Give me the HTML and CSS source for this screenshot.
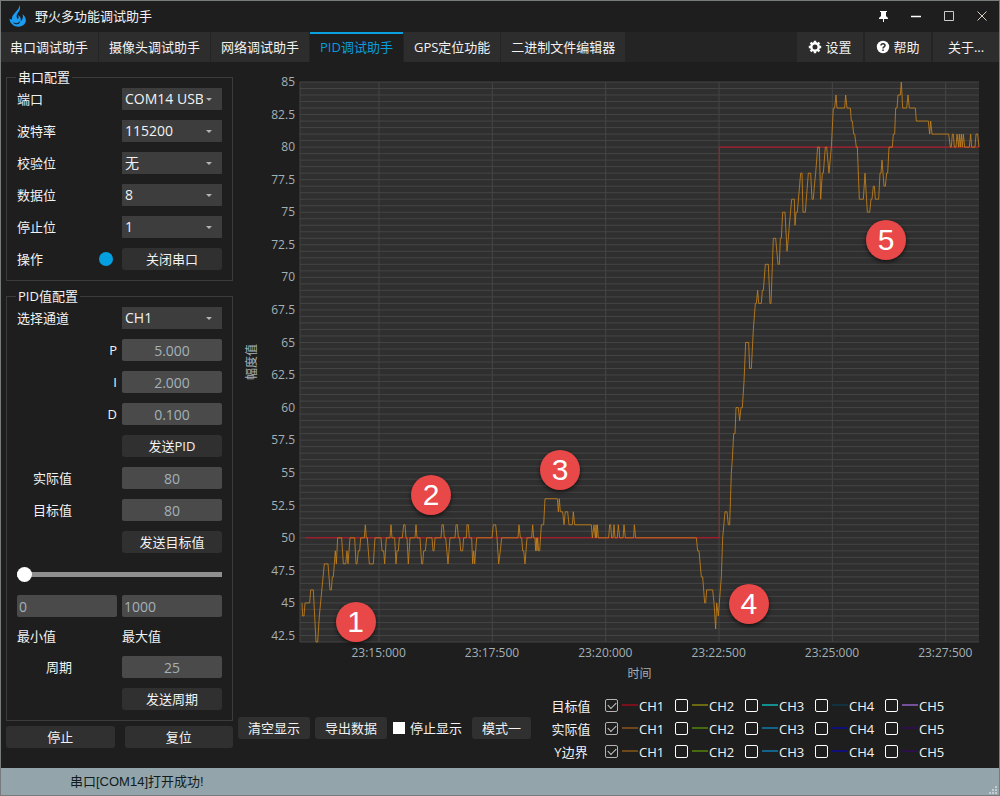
FILE: index.html
```html
<!DOCTYPE html>
<html lang="zh-CN">
<head>
<meta charset="utf-8">
<meta name="viewport" content="width=device-width, initial-scale=1">
<title>野火多功能调试助手</title>
<link rel="stylesheet" href="styles.css">
</head>
<body>
<div class="app">
  <header class="titlebar">
    <svg class="logo" viewBox="0 0 18 22" aria-hidden="true"><path fill="#1c9cf0" d="M10.500 0C12 4 10 6 8.500 8.500c-1.500 2.500-1 4.500.5 5.500 1-1 .5-2.500 0-4 2.500 1.500 3.500 4 2.500 6.500 2-1.500 3-4 2-7.500 3.500 3 4.500 7 2 10-3 3.500-9 3.500-12 .5C1.500 18 .5 16 .5 13.500c.8 1 1.700 1.300 2.500 1C2.500 11 5 9 7 6.500 9 4.500 10.500 2.500 10.500 0z"/><path fill="#1e1e1e" d="M3.500 16.500c2.500 2.500 6 2 7.500-.5.5 3.500-5 5-7.500.5z"/></svg>
    <h1 class="title">野火多功能调试助手</h1>
    <button class="winbtn" type="button" aria-label="置顶"><svg viewBox="0 0 14 14"><path fill="#fff" d="M4 2h7v1h-1v4l2 2v1H8v3H7v-3H3V9l2-2V3H4z"/></svg></button>
    <button class="winbtn" type="button" aria-label="最小化"><svg viewBox="0 0 14 14"><path stroke="#fff" stroke-width="1.5" d="M2 7.5h10"/></svg></button>
    <button class="winbtn" type="button" aria-label="最大化"><svg viewBox="0 0 14 14"><path fill="none" stroke="#ccc" d="M2.5 2.5h9v9h-9z"/></svg></button>
    <button class="winbtn" type="button" aria-label="关闭"><svg viewBox="0 0 14 14"><path stroke="#d8cfc0" d="M2.5 2.5l9 9m0-9l-9 9"/></svg></button>
  </header>

  <nav class="tabs">
    <button class="tab" type="button">串口调试助手</button>
    <button class="tab" type="button">摄像头调试助手</button>
    <button class="tab" type="button">网络调试助手</button>
    <button class="tab active" type="button">PID调试助手</button>
    <button class="tab" type="button">GPS定位功能</button>
    <button class="tab" type="button">二进制文件编辑器</button>
    <div class="tools">
      <button class="tool" type="button"><svg viewBox="0 0 14 14"><circle cx="7" cy="7" r="3.7" fill="none" stroke="#fff" stroke-width="2.4"/><path stroke="#fff" stroke-width="2.4" d="M7 .8v2M7 11.200v2M.8 7h2M11.200 7h2M2.600 2.600l1.400 1.400M10 10l1.400 1.400M2.600 11.400L4 10M10 4l1.400-1.400"/></svg>设置</button>
      <button class="tool" type="button"><svg viewBox="0 0 14 14"><circle cx="7" cy="7" r="6.200" fill="#fff"/><path fill="none" stroke="#2d2d2d" stroke-width="1.500" d="M5 5.500c0-2.500 4-2.500 4 0C9 7 7 6.800 7 8.500M7 9.500V11"/></svg>帮助</button>
      <button class="tool" type="button">关于...</button>
    </div>
  </nav>

  <div class="content">
    <aside class="side">
      <fieldset class="group">
        <legend>串口配置</legend>
        <div class="form">
          <label for="port">端口</label>
          <span class="pick"><select id="port"><option>COM14 USB</option></select></span>
          <label for="baud">波特率</label>
          <span class="pick"><select id="baud"><option>115200</option></select></span>
          <label for="parity">校验位</label>
          <span class="pick"><select id="parity"><option>无</option></select></span>
          <label for="data">数据位</label>
          <span class="pick"><select id="data"><option>8</option></select></span>
          <label for="stop">停止位</label>
          <span class="pick"><select id="stop"><option>1</option></select></span>
          <span class="action">操作<i class="lamp"></i></span>
          <button class="btn" type="button">关闭串口</button>
        </div>
      </fieldset>

      <fieldset class="group">
        <legend>PID值配置</legend>
        <div class="form">
          <label for="channel">选择通道</label>
          <span class="pick"><select id="channel"><option>CH1</option></select></span>
          <label class="end" for="kp">P</label>
          <input class="field" id="kp" value="5.000">
          <label class="end" for="ki">I</label>
          <input class="field" id="ki" value="2.000">
          <label class="end" for="kd">D</label>
          <input class="field" id="kd" value="0.100">
          <button class="btn second" type="button">发送PID</button>
          <label class="inner" for="actual">实际值</label>
          <input class="field" id="actual" value="80">
          <label class="inner" for="target">目标值</label>
          <input class="field" id="target" value="80">
          <button class="btn second" type="button">发送目标值</button>
          <input class="slider" type="range" min="0" max="1000" value="0" aria-label="目标值">
          <input class="field start" id="min" value="0">
          <input class="field start" id="max" value="1000">
          <label class="caption" for="min">最小值</label>
          <label class="caption" for="max">最大值</label>
          <label class="inner" for="period">周期</label>
          <input class="field" id="period" value="25">
          <button class="btn second" type="button">发送周期</button>
        </div>
      </fieldset>

      <div class="pair">
        <button class="btn" type="button">停止</button>
        <button class="btn" type="button">复位</button>
      </div>
    </aside>

    <main class="main">
      <div class="chart">
        <div class="ytitle">幅度值</div>
        <div class="yaxis" id="yaxis"></div>
        <div class="plot">
          <svg class="canvas" viewBox="0 0 2037 43" preserveAspectRatio="none">
            <path class="grid" id="grid"/>
            <path class="line target" id="targetLine"/>
            <path class="line actual" id="actualLine"/>
          </svg>
          <span class="pin" style="left:8.2%;top:96.500%">1</span>
          <span class="pin" style="left:19.300%;top:73.700%">2</span>
          <span class="pin" style="left:38.300%;top:69.300%">3</span>
          <span class="pin" style="left:66.100%;top:93.300%">4</span>
          <span class="pin" style="left:86.300%;top:28.300%">5</span>
        </div>
        <div class="xaxis">
          <span>23:15:000</span><span>23:17:500</span><span>23:20:000</span><span>23:22:500</span><span>23:25:000</span><span>23:27:500</span>
        </div>
        <div class="xtitle">时间</div>
      </div>

      <div class="bottom">
        <div class="actions">
          <button class="btn" type="button">清空显示</button>
          <button class="btn" type="button">导出数据</button>
          <label class="pause"><input type="checkbox">停止显示</label>
          <button class="btn" type="button">模式一</button>
        </div>
        <div class="series" id="series"></div>
      </div>
    </main>
  </div>

  <footer class="status">串口[COM14]打开成功!
    <svg class="grip" viewBox="0 0 9 9" aria-hidden="true"><path fill="#c4cccf" d="M6 0h2v2H6zM3 3h2v2H3zM6 3h2v2H6zM0 6h2v2H0zM3 6h2v2H3zM6 6h2v2H6z"/></svg>
  </footer>
</div>
<script src="chart.js"></script>
</body>
</html>
```

FILE: styles.css
```css
* { box-sizing: border-box; }

body {
  margin: 0;
  background: #1e1e1e;
  color: #f2f2f2;
  font: 13px/16px "Open Sans", "Noto Sans CJK SC", sans-serif;
}

button, input, select { font: inherit; color: inherit; margin: 0; }
button { border: 0; padding: 0; }

.app {
  position: relative;
  display: flex;
  flex-direction: column;
  min-height: 100vh;
  overflow: hidden;
}
.app::after {
  content: "";
  position: absolute;
  inset: 0;
  border: 1px solid #777b7b;
  pointer-events: none;
}

.titlebar { display: flex; align-items: center; height: 32px; padding: 0 2px 0 9px; }
.logo { width: 18px; height: 22px; }
.title { flex: 1; margin: 0 0 0 8px; font-size: 13px; font-weight: 400; }
.winbtn { display: grid; place-items: center; width: 33px; height: 30px; background: none; }
.winbtn svg { width: 14px; height: 14px; }

.tabs { display: flex; gap: 1px; height: 30px; background: #242424; }
.tab { padding: 0 10px; background: #2d2d2d; white-space: nowrap; }
.tab.active { background: #1e1e1e; color: #0a9bdc; box-shadow: inset 0 2px #0aa0e0; }
.tools { display: flex; gap: 2px; margin-left: auto; padding-right: 1px; }
.tool { display: flex; align-items: center; justify-content: center; gap: 3px; width: 66px; background: #2d2d2d; }
.tool svg { width: 14px; height: 14px; }

.content { flex: 1; display: flex; gap: 5px; }

.side { display: flex; flex-direction: column; width: 233px; padding: 7px 0 20px 6px; }
.group { min-width: 0; margin: 0 0 7px; padding: 3px 10px 10px; border: 1px solid #3c3c3c; }
.group + .group { margin-bottom: 5px; }
.group legend { height: 16px; margin-left: -1px; padding: 0 2px; }
.form { display: grid; grid-template-columns: 1fr 1fr; gap: 10px 5px; align-items: center; }
.end { text-align: right; }
.inner { padding-right: 45px; text-align: right; }
.caption { line-height: 19px; }
.second { grid-column: 2; }
.action { display: flex; align-items: center; justify-content: space-between; padding-right: 4px; }
.lamp { width: 14px; height: 14px; border-radius: 50%; background: #049fdf; }

.btn { height: 22px; border-radius: 3px; background: #303030; }

.pick { position: relative; display: block; height: 22px; }
.pick select {
  width: 100%;
  height: 22px;
  padding: 0 19px 0 3px;
  border: 0;
  border-radius: 0;
  background: #3d3d3d;
  font-size: 14px;
  appearance: none;
}
.pick::after {
  content: "";
  position: absolute;
  top: 10px;
  right: 10px;
  border: 3px solid transparent;
  border-top-color: #b4b4b4;
  border-bottom: 0;
  pointer-events: none;
}

.field {
  width: 100%;
  height: 22px;
  padding: 0 2px;
  border: 0;
  border-radius: 2px;
  background: #4a4a4a;
  color: #a3b1b7;
  font-size: 14px;
  text-align: center;
}
.field.start { text-align: left; }

.slider { grid-column: 1 / -1; width: 100%; height: 22px; background: none; appearance: none; }
.slider::-webkit-slider-runnable-track { height: 5px; background: #8f8f8f; }
.slider::-webkit-slider-thumb { width: 15px; height: 15px; margin-top: -5px; border-radius: 50%; background: #fff; appearance: none; }

.pair { display: grid; grid-template-columns: 1fr 1fr; gap: 10px; }

.main { flex: 1; display: flex; flex-direction: column; min-width: 0; padding: 20px 20px 5px 0; }

.chart {
  flex: 1;
  display: grid;
  grid-template-columns: 20px 42px 1fr;
  grid-template-rows: 1fr 22px 20px;
  padding-right: 1px;
  color: #a3b1b7;
  font-size: 12px;
}
.ytitle { padding-right: 0; writing-mode: vertical-rl; text-orientation: sideways; transform: rotate(180deg); text-align: center; line-height: 12px; justify-self: end; }
.yaxis { display: flex; flex-direction: column; justify-content: space-between; margin: -8px 0 -2px; padding-right: 5px; text-align: right; }
.plot { position: relative; background: #2f2f2f; }
.canvas { position: absolute; width: 100%; height: 100%; overflow: visible; }
.grid, .line { fill: none; stroke-width: 1px; vector-effect: non-scaling-stroke; }
.grid { stroke: #454545; shape-rendering: crispEdges; }
.line.target { stroke: #c8102a; shape-rendering: crispEdges; }
.line.actual { stroke: #c58019; stroke-opacity: 0.85; }
.xaxis { grid-column: 3; display: flex; padding-left: 22px; line-height: 22px; }
.xaxis span { flex: 0 0 17.25%; text-align: center; }
.xtitle { grid-column: 3; text-align: center; line-height: 20px; }

.pin {
  position: absolute;
  width: 40px;
  height: 40px;
  margin: -20px 0 0 -20px;
  border-radius: 50%;
  background: #e84848;
  box-shadow: 0 2px 4px #0009;
  color: #fff;
  font: 30px/40px "Liberation Sans", sans-serif;
  text-align: center;
}

.bottom { display: flex; justify-content: space-between; margin-top: 10px; padding-right: 34px; }
.actions { display: flex; align-items: center; gap: 5px; height: 68px; }
.actions .btn { padding: 0 10px; }
.pause { display: flex; align-items: center; gap: 5px; padding: 0 5px 0 1px; }
.pause input { width: 12px; height: 12px; border: 0; background: #fff; appearance: none; }
.pause input:checked { background: #0aa0e0; }

.row { display: flex; align-items: center; height: 23px; }
.row-name { width: 40px; margin-right: 14px; text-align: center; }
.row label { display: flex; align-items: center; width: 70px; white-space: nowrap; }
.row label:last-child { width: 61px; }
.row input { position: relative; flex: none; width: 13px; height: 13px; border: 1px solid #fff; border-radius: 2px; appearance: none; }
.row input:checked { border-color: #b4b4b4; }
.row input:checked::after {
  content: "";
  position: absolute;
  left: 2px;
  top: 2px;
  width: 7px;
  height: 4px;
  border: solid #ccc;
  border-width: 0 0 1px 1px;
  transform: rotate(-45deg);
}
.swatch { width: 16px; height: 2px; margin: 0 1px 2px 4px; }

.status {
  position: relative;
  height: 28px;
  padding-left: 70px;
  background: #93a4aa;
  color: #101c20;
  font-family: "Liberation Sans", "Noto Sans CJK SC", sans-serif;
  line-height: 28px;
}
.grip { position: absolute; right: 2px; bottom: 1px; width: 9px; height: 9px; }
```

FILE: chart.js
```js
const TOP = 85;

// Runs of samples: x offset of the run, then "x,value" pairs.
const actual = [
  [-30, "36,45 38,44 42,44 45,45 59,45 62,46 70,46 78,42 83,42 88,44 103,48 114,48 120,46 124,46 127,47 130,47 136,49 139,48 143,50 155,50 160,48 167,48 171,49 174,48 180,50 194,50 198,48 201,48 205,49 209,49 212,50 223,50 226,51 229,50 232,50 238,48 250,48 255,50 273,50 276,49 281,49 284,48 289,50 300,50 303,51 306,50 314,50 318,48 321,49 325,49 328,50 337,50 341,51 345,51 348,50 351,50 355,48 360,50 375,50 378,51 381,50 390,50 395,48 398,48 401,49 406,49 410,50 426,50 429,49 432,49 435,50 453,50 456,51 460,51 463,50 467,50 474,48 480,50 495,50 498,51 502,51 505,50 509,50 512,49 518,49 521,50 529,50 531,51 535,51 538,50 545,50 548,48 551,49 554,48 560,50 606,50 610,51 617,51 621,50 626,48 631,49 635,50"],
  [630, "24,50 27,51 31,50 35,50 38,49 41,49 45,48 51,50 65,50 68,51 71,50 75,50 77,49 79,50 81,49 83,50 86,49 89,49 94,51 101,51 105,53 142,53 145,52 148,53 151,52 158,52 162,51 166,52 173,52 177,51 187,51 190,52 194,51 244,51 247,50 252,51 256,50 258,51 260,50 262,51 265,50 296,50 299,51 302,51 305,50 309,50 312,51 315,50 322,50 325,51 329,50 339,50 342,51 346,50 371,50 373,51 377,50 559,50 563,49 567,49 574,47 578,47 584,45 587,45 590,46 608,46 612,45 617,43 620,45 625,44 628,45 634,47 638,50 645,52 651,52 655,51 659,51 664,55"],
  [1200, "97,56 101,58 105,58 108,60 115,60 119,59 123,60 127,60 132,62 137,65 146,65 149,63 154,63 160,66 166,68 169,68 173,69 176,68 184,68 187,69 190,69"],
  [1380, "16,71 25,71 30,68 33,68 40,73 47,73 54,71 58,71 61,73 64,73 68,75 75,75 81,72 85,73 88,74 95,76 103,76 105,74 108,75 112,75 122,78 126,78 129,75 136,75 145,78 152,78 156,76 160,76 163,77 167,78 173,80 178,80 182,76 187,78 190,78 196,80 200,80 207,78 214,80 218,82 220,83 224,83 228,84 231,83 254,83 257,84 261,83 271,83 274,82 277,82 281,81 284,81 289,80 292,80 298,76 310,76 315,78 322,75 329,75 333,76 336,76 340,77 343,77 346,76 356,76 360,78 363,78 366,79 372,77 376,77 380,78 383,78 387,80 397,80 400,81 404,81 407,83 411,83 414,84 421,84 424,85 428,83 440,83 444,84 448,83 466,83 469,82 505,82 509,81 512,82 516,81 566,81 571,80 574,80 577,81 580,81 583,80 588,80 591,81 596,80 598,81 601,80 604,81 607,80 610,81 614,80 628,80 632,81 635,80 645,80 648,81 653,81 657,80"]
];

const points = actual.flatMap(([offset, run]) =>
  run.split(" ").map(pair => {
    const [x, value] = pair.split(",").map(Number);
    return (x + offset) + " " + (TOP - value);
  }));
document.getElementById("actualLine").setAttribute("d", "M" + points.join("L"));
document.getElementById("targetLine").setAttribute("d", "M15 35H1258V5H2037");

let grid = "M0 0V43";
for (let y = 0; y <= 43; y += 0.5) grid += "M0 " + y + "H2037";
for (const x of [237, 577, 917, 1257, 1597, 1937]) grid += "M" + x + " 0V43";
document.getElementById("grid").setAttribute("d", grid);

const axis = document.getElementById("yaxis");
for (let value = TOP; value >= 42.5; value -= 2.5) {
  const label = document.createElement("span");
  label.textContent = value;
  axis.append(label);
}

const rows = [
  ["目标值", ["#7a0f1e", "#6b6a10", "#129090", "#12323f", "#75509a"]],
  ["实际值", ["#6e4818", "#456a10", "#12648a", "#101078", "#2c104c"]],
  ["Y边界", ["#6e4818", "#456a10", "#12648a", "#101078", "#2c104c"]]
];
const series = document.getElementById("series");
for (const [name, colors] of rows) {
  const row = document.createElement("div");
  row.className = "row";
  row.innerHTML = `<span class="row-name">${name}</span>` + colors.map((color, i) =>
    `<label><input type="checkbox"${i ? "" : " checked"}><i class="swatch" style="background:${color}"></i>CH${i + 1}</label>`).join("");
  series.append(row);
}
```
